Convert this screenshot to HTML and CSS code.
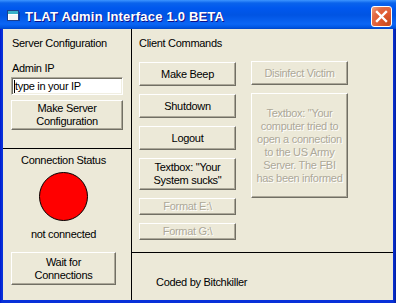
FILE: index.html
```html
<!DOCTYPE html>
<html lang="en">
<head>
    <meta charset="UTF-8">
    <title>TLAT Admin Interface 1.0 BETA</title>
    <link rel="stylesheet" href="styles.css">
</head>
<body>
    <div class="window">
        <div class="titlebar">
            <svg class="appIcon" width="13" height="12" viewBox="0 0 13 12">
                <rect x="0.5" y="0.5" width="11" height="10" fill="#fff" stroke="#1b3f8f"/>
                <rect x="1" y="1" width="10" height="3" fill="#38b0c8"/>
                <rect x="2" y="5" width="9" height="5" fill="#f4f4f4"/>
                <rect x="12" y="2" width="1" height="9" fill="#0a2a7a" opacity="0.6"/>
            </svg>
            <span class="title">TLAT Admin Interface 1.0 BETA</span>
            <div class="closeBtn">
                <svg width="13" height="13" viewBox="0 0 13 13">
                    <path d="M2 2 L11 11 M11 2 L2 11" stroke="#fff" stroke-width="2.4" stroke-linecap="square"/>
                </svg>
            </div>
        </div>

        <div class="client">
            <div class="paneLeft">
                <div class="serverConfig">
                    <div class="label">Server Configuration</div>
                    <div class="label adminLabel">Admin IP</div>
                    <div class="textbox"><span class="caret"></span>type in your IP</div>
                    <div class="btn configBtn">Make Server<br>Configuration</div>
                </div>
                <div class="status">
                    <div class="statusCol">
                        <div class="label">Connection Status</div>
                        <div class="led"></div>
                        <div class="label statusText">not connected</div>
                        <div class="btn waitBtn">Wait for<br>Connections</div>
                    </div>
                </div>
            </div>

            <div class="paneRight">
                <div class="commands">
                    <div class="label">Client Commands</div>
                    <div class="cmdGrid">
                        <div class="cmdCol">
                            <div class="btn cmdBtn">Make Beep</div>
                            <div class="btn cmdBtn">Shutdown</div>
                            <div class="btn cmdBtn">Logout</div>
                            <div class="btn cmdBtn tall">Textbox: "Your<br>System sucks"</div>
                            <div class="btn cmdBtn small disabled">Format E:\</div>
                            <div class="btn cmdBtn small disabled">Format G:\</div>
                        </div>
                        <div class="cmdCol second">
                            <div class="btn cmdBtn disabled">Disinfect Victim</div>
                            <div class="btn cmdBtn big disabled">Textbox: "Your<br>computer tried to<br>open a connection<br>to the US Army<br>Server. The FBI<br>has been informed</div>
                        </div>
                    </div>
                </div>
                <div class="credits">Coded by Bitchkiller</div>
            </div>
        </div>
    </div>
</body>
</html>
```

FILE: styles.css
```css
body{
    margin: 0;
    background-color: #fff;
    font-family: "Liberation Sans", Arial, sans-serif;
    font-size: 11px;
    letter-spacing: -0.3px;
    color: #000;
}

.window{
    width: 396px;
    height: 303px;
    display: flex;
    flex-direction: column;
    background-color: #0831d9;
    background-image: linear-gradient(90deg, #0019cf 0, #0831d9 2px, #0831d9 393px, #001ea0 396px);
}

.titlebar{
    height: 29px;
    display: flex;
    align-items: center;
    padding: 1px 4px 0 7px;
    box-sizing: border-box;
    background: linear-gradient(180deg, #3d95ff 0, #0a63ec 3px, #0058ee 8px, #0054e3 15px, #0b66f5 24px, #0058e6 27px, #0046c8 29px);
}

.appIcon{
    flex: none;
    margin-top: 1px;
}

.title{
    margin-left: 5px;
    margin-top: 2px;
    color: #fff;
    font-family: "Liberation Sans", Arial, sans-serif;
    font-weight: bold;
    font-size: 13px;
    letter-spacing: 0.2px;
    text-shadow: 1px 1px #0f1089;
    flex: 1;
}

.closeBtn{
    width: 21px;
    height: 21px;
    box-sizing: border-box;
    border: 1px solid #fff;
    border-radius: 3px;
    margin-top: 2px;
    display: flex;
    justify-content: center;
    align-items: center;
    background: radial-gradient(circle at 85% 85%, #c64c1f 0, #e0582e 40%, #e26b45 70%, #f0a585 100%);
}

.client{
    flex: 1;
    margin: 0 3px 3px 3px;
    background-color: #ece9d8;
    display: flex;
}

.label{
    line-height: 13px;
    white-space: nowrap;
}

.btn{
    box-sizing: border-box;
    background-color: #ece9d8;
    border: 1px solid;
    border-color: #fff #716f64 #716f64 #fff;
    box-shadow: inset -1px -1px #aca899;
    display: flex;
    justify-content: center;
    align-items: center;
    text-align: center;
    line-height: 13px;
}

.btn.disabled{
    color: #aca899;
    text-shadow: 1px 1px #fff;
}

/* left side */
.paneLeft{
    width: 128px;
    border-right: 1px solid #000;
    display: flex;
    flex-direction: column;
}

.serverConfig{
    height: 120px;
    border-bottom: 1px solid #000;
    padding: 8px 0 0 8px;
    box-sizing: border-box;
}

.serverConfig .label{
    margin-left: 1px;
}

.adminLabel{
    margin-top: 12px;
}

.textbox{
    width: 112px;
    height: 18px;
    margin-top: 2px;
    box-sizing: border-box;
    background-color: #fff;
    border: 1px solid;
    border-color: #aca899 #fff #fff #aca899;
    box-shadow: inset 1px 1px #716f64, inset -1px -1px #f1efe2;
    padding: 2px 0 0 2px;
    line-height: 13px;
    display: flex;
}

.caret{
    width: 1px;
    height: 13px;
    background-color: #000;
}

.configBtn{
    width: 112px;
    height: 30px;
    margin-top: 5px;
}

.status{
    flex: 1;
    padding: 5px 0 0 8px;
}

.statusCol{
    width: 105px;
    display: flex;
    flex-direction: column;
    align-items: center;
}

.led{
    width: 49px;
    height: 49px;
    box-sizing: border-box;
    margin-top: 5px;
    border-radius: 50%;
    border: 1px solid #000;
    background-color: #ff0000;
}

.statusText{
    margin-top: 7px;
}

.waitBtn{
    width: 105px;
    height: 33px;
    margin-top: 11px;
}

/* right side */
.paneRight{
    flex: 1;
    display: flex;
    flex-direction: column;
}

.commands{
    height: 224px;
    border-bottom: 1px solid #000;
    padding: 8px 0 0 7px;
    box-sizing: border-box;
}

.cmdGrid{
    display: flex;
    column-gap: 15px;
    margin-top: 12px;
}

.cmdCol{
    display: flex;
    flex-direction: column;
    row-gap: 8px;
}

.cmdCol.second{
    margin-top: -1px;
}

.cmdBtn{
    width: 97px;
    height: 24px;
}

.cmdBtn.tall{
    height: 32px;
}

.cmdBtn.small{
    height: 17px;
}

.cmdBtn.big{
    height: 105px;
}

.credits{
    padding: 23px 0 0 24px;
    line-height: 13px;
}
```
